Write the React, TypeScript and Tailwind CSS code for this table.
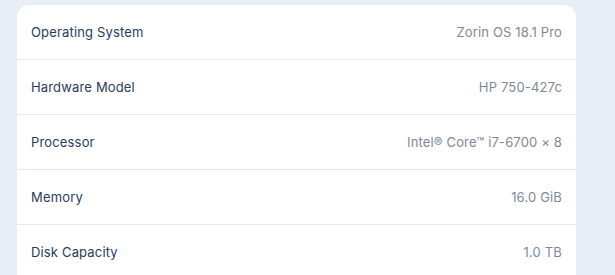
const filas = [
  { etiqueta: 'Operating System', valor: 'Zorin OS 18.1 Pro' },
  { etiqueta: 'Hardware Model', valor: 'HP 750-427c' },
  { etiqueta: 'Processor', valor: 'Intel® Core™ i7-6700 × 8' },
  { etiqueta: 'Memory', valor: '16.0 GiB' },
  { etiqueta: 'Disk Capacity', valor: '1.0 TB' },
];

export default function App() {
  return (
    <div className="h-[275px] w-[615px] overflow-hidden bg-[#e9eef6] pl-[17px] pt-[5px] font-['Inter',sans-serif]">
      <div className="w-[559px] rounded-t-[12px] bg-white">
        {filas.map((f, i) => (
          <div
            key={f.etiqueta}
            className={
              'flex h-[55px] items-center justify-between px-[14px] pt-px text-[13px] tracking-[0.16px] ' +
              (i < filas.length - 1 ? 'border-b border-[#e6e9ee]' : '')
            }
          >
            <span className="text-[#2a3c5c]">{f.etiqueta}</span>
            <span className="text-[#7d899b]">{f.valor}</span>
          </div>
        ))}
      </div>
    </div>
  );
}
